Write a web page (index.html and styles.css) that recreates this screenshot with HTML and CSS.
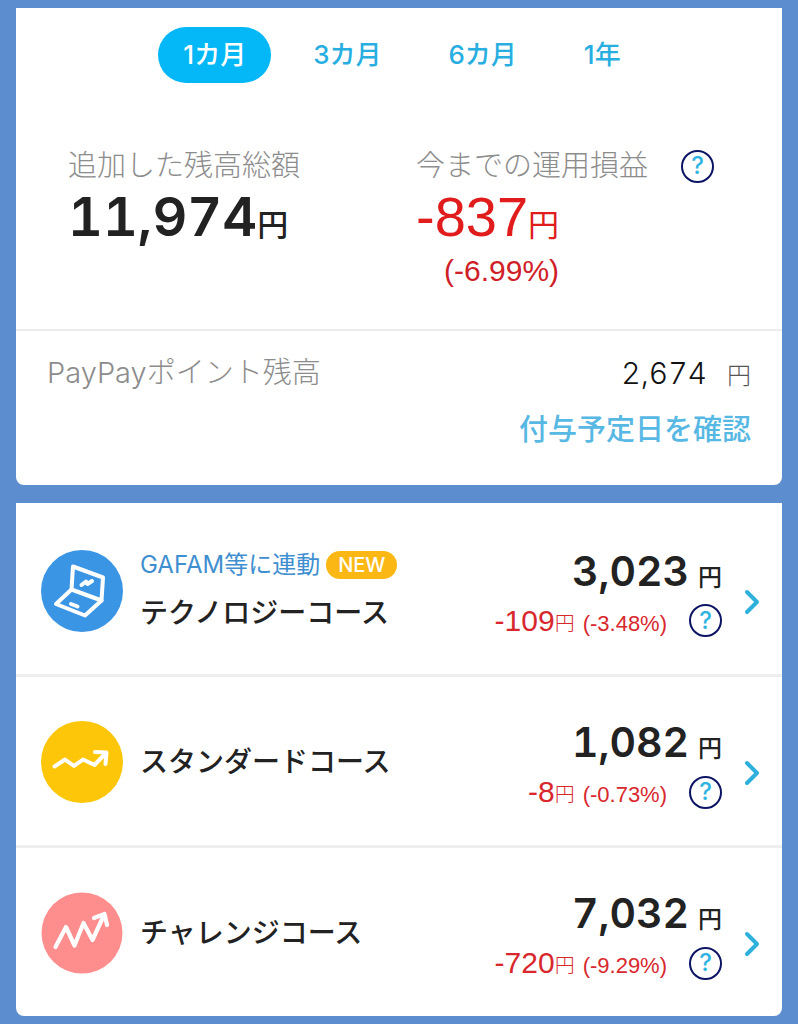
FILE: index.html
```
<!DOCTYPE html>
<html lang="ja">
<head>
<meta charset="utf-8">
<meta name="viewport" content="width=device-width, initial-scale=1">
<title>ポイント運用</title>
<link rel="stylesheet" href="styles.css">
</head>
<body>
<main class="page">
  <section class="card">
    <nav class="periods" aria-label="期間">
      <button type="button" class="period period-active" aria-pressed="true">1カ月</button>
      <button type="button" class="period" aria-pressed="false">3カ月</button>
      <button type="button" class="period" aria-pressed="false">6カ月</button>
      <button type="button" class="period" aria-pressed="false">1年</button>
    </nav>
    <div class="stats">
      <div class="stat">
        <div class="stat-head"><h2 class="label">追加した残高総額</h2></div>
        <p class="total">11,974<span class="yen-large">円</span></p>
      </div>
      <div class="stat">
        <div class="stat-head">
          <h2 class="label">今までの運用損益</h2>
          <button type="button" class="help">?</button>
        </div>
        <div class="loss">
          <p class="total total-loss">-837<span class="yen-large yen-loss">円</span></p>
          <p class="rate-large">(-6.99%)</p>
        </div>
      </div>
    </div>
    <div class="balance">
      <div class="balance-row">
        <h2 class="label">PayPayポイント残高</h2>
        <p class="points">2,674<span class="points-yen">円</span></p>
      </div>
      <a class="schedule" href="#schedule">付与予定日を確認</a>
    </div>
  </section>

  <ul class="card courses">
    <li class="course">
      <svg class="badge" viewBox="0 0 82 82" aria-hidden="true">
        <circle cx="41" cy="41" r="41" fill="#3b95e5"/>
        <g fill="none" stroke="#fff" stroke-width="4" stroke-linejoin="round" stroke-linecap="round">
          <path d="M32 16.500L62 27.500L60.500 50.500L30.500 39.500Z"/>
          <path d="M30.500 39.500L15 54L44 65.500L60.500 50.500"/>
          <path d="M40.500 35L45 31.500L46.500 34L51 31"/>
          <path d="M30 54L36.500 56.500"/>
        </g>
      </svg>
      <div class="course-text">
        <p class="course-tag">GAFAM等に連動<span class="new">NEW</span></p>
        <h3 class="course-name">テクノロジーコース</h3>
      </div>
      <div class="amounts">
        <p class="amount">3,023<span class="yen">円</span></p>
        <div class="change-row">
          <p class="change">-109<span class="yen-small">円</span><span class="rate">(-3.48%)</span></p>
          <button type="button" class="help">?</button>
        </div>
      </div>
      <a class="go" href="#technology" aria-label="テクノロジーコースの詳細">
        <svg class="chevron" viewBox="0 0 16 28" aria-hidden="true"><path d="M3 4L13 14L3 24"/></svg>
      </a>
    </li>
    <li class="course">
      <svg class="badge" viewBox="0 0 82 82" aria-hidden="true">
        <circle cx="41" cy="41" r="41" fill="#fdc608"/>
        <g fill="none" stroke="#fff" stroke-width="4" stroke-linejoin="round" stroke-linecap="round">
          <path d="M13.500 45.500L24 38.500L33 45L42 38.500L53.500 44L64 33"/>
          <path d="M54 31L65.500 31.500L64.500 43"/>
        </g>
      </svg>
      <div class="course-text">
        <h3 class="course-name">スタンダードコース</h3>
      </div>
      <div class="amounts">
        <p class="amount">1,082<span class="yen">円</span></p>
        <div class="change-row">
          <p class="change">-8<span class="yen-small">円</span><span class="rate">(-0.73%)</span></p>
          <button type="button" class="help">?</button>
        </div>
      </div>
      <a class="go" href="#standard" aria-label="スタンダードコースの詳細">
        <svg class="chevron" viewBox="0 0 16 28" aria-hidden="true"><path d="M3 4L13 14L3 24"/></svg>
      </a>
    </li>
    <li class="course">
      <svg class="badge" viewBox="0 0 82 82" aria-hidden="true">
        <circle cx="41" cy="41" r="40.500" fill="#fe8d8d"/>
        <g fill="none" stroke="#fff" stroke-width="4.200" stroke-linejoin="round" stroke-linecap="round">
          <path d="M14.500 55L25 35L33.500 53.500L42.500 31L51.500 48L63 23"/>
          <path d="M53 26L63.500 22L66 33"/>
        </g>
      </svg>
      <div class="course-text">
        <h3 class="course-name">チャレンジコース</h3>
      </div>
      <div class="amounts">
        <p class="amount">7,032<span class="yen">円</span></p>
        <div class="change-row">
          <p class="change">-720<span class="yen-small">円</span><span class="rate">(-9.29%)</span></p>
          <button type="button" class="help">?</button>
        </div>
      </div>
      <a class="go" href="#challenge" aria-label="チャレンジコースの詳細">
        <svg class="chevron" viewBox="0 0 16 28" aria-hidden="true"><path d="M3 4L13 14L3 24"/></svg>
      </a>
    </li>
  </ul>
</main>
</body>
</html>
```
FILE: styles.css
```
* {
  box-sizing: border-box;
  margin: 0;
  padding: 0;
}

body {
  background: #5c8ecf;
  color: #222;
  font-family: Inter, "Noto Sans CJK JP", sans-serif;
  font-variant-numeric: tabular-nums;
}

button {
  border: 0;
  background: none;
  font-family: inherit;
  cursor: pointer;
}

a {
  text-decoration: none;
}

.page {
  display: flex;
  flex-direction: column;
  gap: 18px;
  padding: 8px 16px;
}

.card {
  background: #fff;
  border-radius: 0 0 8px 8px;
}

.periods {
  display: flex;
  justify-content: center;
  gap: 17px;
  padding: 19px 0 0 6px;
}

.period {
  height: 56px;
  padding: 0 25px;
  border-radius: 28px;
  color: #28aee0;
  font-size: 26px;
  font-weight: 500;
  line-height: 56px;
}

.period-active {
  background: #04b8f8;
  color: #fff;
}

.stats {
  display: grid;
  grid-template-columns: 1fr 1fr;
  padding: 65px 18px 37px 52px;
}

.stat-head {
  display: flex;
  align-items: center;
  gap: 33px;
  height: 36px;
}

.label {
  color: #8c8c8c;
  font-size: 29px;
  font-weight: 300;
  line-height: 36px;
  white-space: nowrap;
}

.help {
  flex: none;
  width: 33px;
  height: 33px;
  border: 2px solid #0c1464;
  border-radius: 50%;
  color: #30b4e2;
  font-size: 24px;
  font-weight: 500;
  line-height: 28px;
}

.total {
  font-size: 54px;
  font-weight: 600;
  line-height: 66px;
  white-space: nowrap;
}

.loss {
  width: max-content;
}

.total-loss {
  color: #e01c1c;
  font-family: "Liberation Sans", "Noto Sans CJK JP", sans-serif;
  font-size: 56px;
  font-weight: 400;
}

.yen-large {
  font-size: 31px;
  font-weight: 500;
  line-height: 1;
}

.yen-loss {
  font-weight: 400;
}

.rate-large {
  color: #cf2028;
  font-family: "Liberation Sans", sans-serif;
  font-size: 30px;
  line-height: 42px;
  text-align: right;
}

.balance {
  display: flex;
  flex-direction: column;
  gap: 19px;
  padding: 24px 31px 35px;
  border-top: 2px solid #ececec;
}

.balance-row {
  display: flex;
  align-items: center;
  justify-content: space-between;
}

.points {
  display: flex;
  align-items: baseline;
  gap: 20px;
  color: #111;
  font-size: 30px;
  font-weight: 300;
  line-height: 36px;
}

.points-yen {
  color: #555;
  font-size: 24px;
  line-height: 1;
}

.schedule {
  align-self: flex-end;
  color: #58b8e4;
  font-size: 29px;
  font-weight: 500;
  line-height: 40px;
}

.courses {
  list-style: none;
}

.course {
  display: flex;
  align-items: center;
  min-height: 171px;
  padding: 4px 22px 0 25px;
}

.course + .course {
  padding-top: 2px;
  border-top: 3px solid #eee;
}

.badge {
  flex: none;
  width: 82px;
  height: 82px;
  margin-right: 17px;
}

.course-text {
  display: flex;
  flex: 1;
  flex-direction: column;
  gap: 12px;
}

.course-tag {
  display: flex;
  align-items: center;
  gap: 6px;
  color: #3f8fd0;
  font-size: 24px;
  font-weight: 400;
  line-height: 32px;
  white-space: nowrap;
}

.new {
  padding: 0 12px;
  border-radius: 14px;
  background: #fbb814;
  color: #fff;
  font-size: 20px;
  font-weight: 500;
  line-height: 28px;
}

.course-name {
  font-size: 28px;
  font-weight: 500;
  line-height: 40px;
  white-space: nowrap;
}

.amounts {
  display: flex;
  flex-direction: column;
  align-items: flex-end;
  gap: 9px;
  padding-top: 3px;
}

.amount {
  display: flex;
  align-items: baseline;
  gap: 9px;
  font-size: 41px;
  font-weight: 600;
  line-height: 48px;
}

.yen {
  font-size: 24px;
  font-weight: 500;
  line-height: 1;
}

.change-row {
  display: flex;
  align-items: center;
  gap: 22px;
  height: 34px;
}

.change {
  color: #d8282e;
  font-family: "Liberation Sans", "Noto Sans CJK JP", sans-serif;
  font-size: 30px;
  line-height: 34px;
  white-space: nowrap;
}

.yen-small {
  font-size: 20px;
  font-weight: 300;
  line-height: 1;
}

.rate {
  margin-left: 8px;
  font-size: 22px;
  line-height: 1;
}

.go {
  display: flex;
  margin: 22px 0 0 22px;
}

.chevron {
  width: 16px;
  height: 28px;
  fill: none;
  stroke: #2eb0dc;
  stroke-width: 4;
  stroke-linecap: round;
  stroke-linejoin: round;
}
```
